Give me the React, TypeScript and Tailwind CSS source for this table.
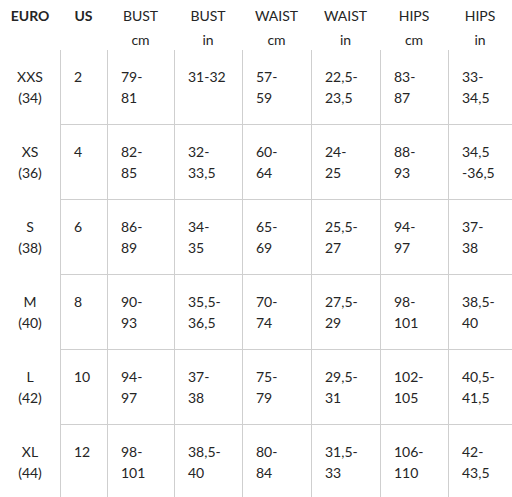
const headers: [string, string][] = [
  ["EURO", ""],
  ["US", ""],
  ["BUST", "cm"],
  ["BUST", "in"],
  ["WAIST", "cm"],
  ["WAIST", "in"],
  ["HIPS", "cm"],
  ["HIPS", "in"],
];

const rows: string[][][] = [
  [["XXS", "(34)"], ["2"], ["79-", "81"], ["31-32"], ["57-", "59"], ["22,5-", "23,5"], ["83-", "87"], ["33-", "34,5"]],
  [["XS", "(36)"], ["4"], ["82-", "85"], ["32-", "33,5"], ["60-", "64"], ["24-", "25"], ["88-", "93"], ["34,5", "-36,5"]],
  [["S", "(38)"], ["6"], ["86-", "89"], ["34-", "35"], ["65-", "69"], ["25,5-", "27"], ["94-", "97"], ["37-", "38"]],
  [["M", "(40)"], ["8"], ["90-", "93"], ["35,5-", "36,5"], ["70-", "74"], ["27,5-", "29"], ["98-", "101"], ["38,5-", "40"]],
  [["L", "(42)"], ["10"], ["94-", "97"], ["37-", "38"], ["75-", "79"], ["29,5-", "31"], ["102-", "105"], ["40,5-", "41,5"]],
  [["XL", "(44)"], ["12"], ["98-", "101"], ["38,5-", "40"], ["80-", "84"], ["31,5-", "33"], ["106-", "110"], ["42-", "43,5"]],
];

export default function App() {
  return (
    <div
      className="w-[512px] bg-white text-[14px] text-[#252525]"
      style={{ fontFamily: "Lato, 'Open Sans', sans-serif" }}
    >
      <div className="grid grid-cols-[60px_47px_67px_68px_69px_69px_68px_64px]">
        {headers.map(([top, bottom], i) => (
          <div
            key={i}
            className={`flex h-[50px] flex-col items-center pt-[4px] leading-[24px] ${
              i < 2 ? "font-bold" : ""
            }`}
          >
            <span>{top}</span>
            {bottom && <span>{bottom}</span>}
          </div>
        ))}
        {rows.map((row, r) =>
          row.map((cell, c) => (
            <div
              key={`${r}-${c}`}
              className={
                c === 0
                  ? "flex h-[75px] flex-col items-center pt-[16px] leading-[21px]"
                  : "flex h-[75px] flex-col border-b border-l border-[#cfcfcf] pl-[13px] pt-[16px] leading-[21px]"
              }
            >
              {cell.map((line, k) => (
                <span key={k}>{line}</span>
              ))}
            </div>
          ))
        )}
      </div>
    </div>
  );
}
